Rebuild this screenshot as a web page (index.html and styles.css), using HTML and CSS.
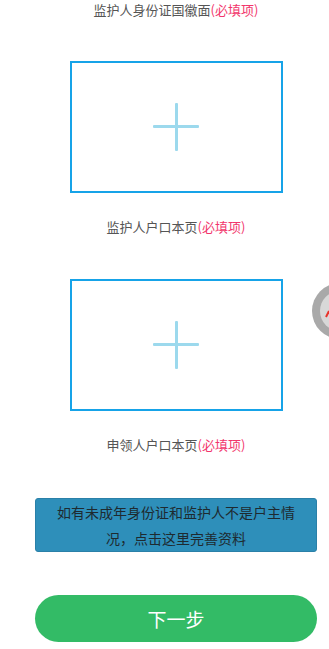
FILE: index.html
```html
<!DOCTYPE html>
<html lang="zh-CN">
<head>
  <meta charset="UTF-8" />
  <meta name="viewport" content="width=device-width, initial-scale=1.0" />
  <title>上传证件</title>
  <link rel="stylesheet" href="styles.css">
</head>
<body>
  <div class="page">
    <div class="upload-item first">
      <p class="upload-label">监护人身份证国徽面<span class="required">(必填项)</span></p>
      <div class="upload-box"><span class="plus"></span></div>
    </div>

    <div class="upload-item">
      <p class="upload-label">监护人户口本页<span class="required">(必填项)</span></p>
      <div class="upload-box"><span class="plus"></span></div>
    </div>

    <div class="upload-item">
      <p class="upload-label">申领人户口本页<span class="required">(必填项)</span></p>
    </div>

    <div class="notice">如有未成年身份证和监护人不是户主情况，点击这里完善资料</div>

    <button class="next-btn">下一步</button>
  </div>

  <!-- floating helper ball, mostly off screen -->
  <div class="float-ball">
    <svg width="17" height="56" viewBox="0 0 17 56">
      <circle cx="28" cy="28" r="28" fill="#a9a9a9" />
      <circle cx="28" cy="28" r="20" fill="#d8d8d8" />
      <path d="M14 34 L17 28" stroke="#e8332a" stroke-width="2" fill="none" />
    </svg>
  </div>
</body>
</html>
```

FILE: styles.css
```css
* {
  box-sizing: border-box;
  margin: 0;
  padding: 0;
  font-family: "Noto Sans CJK SC", "Noto Sans", sans-serif;
}

body {
  background: #fff;
  width: 329px;
  height: 649px;
  overflow: hidden;
}

.page {
  padding-left: 23px;
}

.upload-item {
  margin-top: 24px;
}

.upload-item.first {
  margin-top: 0;
}

.upload-label {
  font-size: 13px;
  line-height: 20px;
  color: #555;
  text-align: center;
}

.required {
  color: #f2366c;
}

.upload-box {
  position: relative;
  width: 213px;
  height: 132px;
  margin: 42px auto 0;
  border: 2px solid #16a3e8;
}

.upload-item.first .upload-box {
  margin-top: 41px;
}

.plus {
  position: absolute;
  left: 50%;
  top: 50%;
  width: 46px;
  height: 48px;
  margin: -24px 0 0 -23px;
}

.plus::before,
.plus::after {
  content: "";
  position: absolute;
  background: #9cd9ed;
  border-radius: 1px;
}

.plus::before {
  left: 0;
  right: 0;
  top: 22px;
  height: 3px;
}

.plus::after {
  top: 0;
  bottom: 0;
  left: 22px;
  width: 3px;
}

.notice {
  margin: 43px 12px 0;
  padding: 0 21px;
  background: #2e8fba;
  border: 1px solid #2a80a8;
  border-radius: 3px;
  color: #1e2a30;
  font-size: 14px;
  line-height: 26px;
  text-align: center;
}

.next-btn {
  display: block;
  width: 282px;
  height: 47px;
  margin: 43px auto 0;
  border: none;
  border-radius: 24px;
  background: #33bb66;
  color: #fff;
  font-size: 19px;
}

.float-ball {
  position: absolute;
  right: 0;
  top: 283px;
  width: 17px;
  height: 56px;
}
```
